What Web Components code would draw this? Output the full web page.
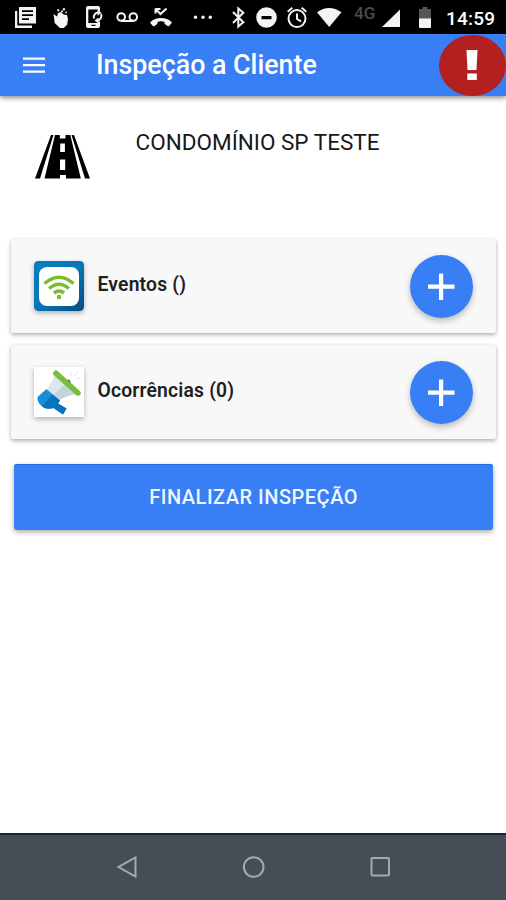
<!DOCTYPE html>
<html lang="pt-BR">
<head>
<meta charset="utf-8">
<title>Inspeção a Cliente</title>
<style>
  body {
    margin: 0;
    background: #fff;
    font-family: Roboto, "Noto Sans", sans-serif;
  }
</style>
</head>
<body>
<inspection-app></inspection-app>

<script>
// statusBar.js

class StatusBar extends HTMLElement {
  constructor() {
    super();
    this.attachShadow({ mode: 'open' });
  }

  connectedCallback() {
    this.shadowRoot.innerHTML = `
      <style>
        :host {
          display: flex;
          justify-content: space-between;
          box-sizing: border-box;
          height: 34px;
          padding: 0 10px 0 14px;
          background: #000;
          color: #fff;
        }

        .group {
          display: flex;
          align-items: center;
        }

        svg {
          display: block;
          flex: none;
          height: 34px;
          fill: #f4f4f4;
        }

        .line {
          fill: none;
          stroke: #f4f4f4;
          stroke-width: 2;
        }

        .network {
          width: 22px;
          margin: 0 6px 8px 11px;
          font-size: 17px;
          font-weight: 500;
          line-height: 20px;
          color: #4c4c4c;
        }

        .time {
          width: 50px;
          margin: 2px 0 0 14px;
          font-size: 19px;
          font-weight: 500;
          letter-spacing: 0.2px;
          white-space: nowrap;
        }
      </style>
      <div class="group">
        <svg width="24" viewBox="14 0 24 34">
          <path d="M15 11h2.3v14.6H32V28H15z"/>
          <path fill-rule="evenodd" d="M19 7h17v16.5H19zM22 10.3v1.7h11v-1.7zM22 14.3v1.7h11v-1.7zM22 18.3v1.7h7v-1.7z"/>
        </svg>
        <svg width="34" viewBox="38 0 34 34">
          <path d="M53.5 14l3.500 2.500 1-3.500 3-1 2.500 2.500 3.500.5 1 4-.8 5.500-3.400 3.500h-3.800l-5.300-5z"/>
          <path d="M57 9.5l1.8-.5.7 2-1.8.5zM62.5 8.8l2-1 .8 2-1.8 1zM60.8 10.900l1.8-.6.6 1.600-1.8.6zM65 12l1.4-.7.6 1.5-1.4.7z"/>
        </svg>
        <svg width="36" viewBox="72 0 36 34">
          <path fill-rule="evenodd" d="M88 6h10q2 0 2 2v3h-2v-1.5H88.3V23H98v-1.5h2V26q0 2-2 2H88q-2 0-2-2V8q0-2 2-2zM91.5 24.8v1.3h4v-1.3z"/>
          <path class="line" d="M94 18.5a4.600 4.600 0 0 1 5-6M101 14a4.600 4.600 0 0 1-4 6.5"/>
          <path d="M97.5 9.5l4 3.2-4 3zM98.5 17.5l-4 3 4 3z"/>
        </svg>
        <svg width="34" viewBox="108 0 34 34">
          <g class="line"><circle cx="121.2" cy="17" r="3.8"/><circle cx="133.3" cy="17" r="3.8"/><path d="M121 21h12.5"/></g>
        </svg>
        <svg width="36" viewBox="142 0 36 34">
          <path class="line" d="M155.5 8.5v5M155.5 9h5M155.8 9.3l4.700 4.700 6-5.500"/>
          <path d="M161 18c4.2 0 8 1.5 10.5 4l.2 1-2.8 3.2-1 .1-3.2-2.2-.4-2.3q-3.3-1-6.6 0l-.4 2.3-3.2 2.2-1-.1-2.8-3.2.2-1c2.5-2.5 6.3-4 10.5-4z"/>
        </svg>
        <svg width="36" viewBox="178 0 36 34">
          <circle cx="195.5" cy="17.3" r="1.7"/><circle cx="203" cy="17.3" r="1.7"/><circle cx="210.3" cy="17.3" r="1.7"/>
        </svg>
      </div>
      <div class="group">
        <svg width="16" viewBox="231 0 16 34">
          <path class="line" d="M233 12l10.3 10.3-5 4.2V8.5l5 4.2L233 23"/>
        </svg>
        <svg width="34" viewBox="247 0 34 34">
          <path fill-rule="evenodd" d="M266.5 7.2a10.300 10.300 0 1 1 0 20.6 10.300 10.300 0 0 1 0-20.6zM261.5 16v3.2h10V16z"/>
        </svg>
        <svg width="30" viewBox="281 0 30 34">
          <g class="line"><circle cx="297" cy="18.6" r="8.5"/><path d="M297 13.5v5.5l4 2.4M287.7 11.7l4.6-3.9M306.3 11.7l-4.6-3.9"/></g>
        </svg>
        <svg width="32" viewBox="311 0 32 34">
          <path d="M317 12.2q12-8.6 24.5 0L329.2 27z"/>
        </svg>
        <span class="network">4G</span>
        <svg width="19" viewBox="382 0 19 34">
          <path d="M400 9.5V27h-18z"/>
        </svg>
        <svg width="31" viewBox="401 0 31 34">
          <path fill="#565656" d="M419 9h3.5V7h5v2h3.5v10h-12z"/>
          <path d="M419 18.5h12V27q0 1-1 1h-10q-1 0-1-1z"/>
        </svg>
        <span class="time">14:59</span>
      </div>
    `;
  }
}

customElements.define('status-bar', StatusBar);

// appHeader.js

class AppHeader extends HTMLElement {
  constructor() {
    super();
    this.attachShadow({ mode: 'open' });
  }

  connectedCallback() {
    this.shadowRoot.innerHTML = `
      <style>
        :host {
          display: flex;
          align-items: center;
          height: 62px;
          background: #387ef5;
          color: #fff;
          box-shadow: 0 2px 5px rgba(0, 0, 0, 0.45);
        }

        .menu {
          margin-left: 23px;
        }

        h1 {
          flex: 1;
          margin: 0 0 0 51px;
          font-size: 26.8px;
          font-weight: 500;
          line-height: 32px;
          white-space: nowrap;
        }

        .alert {
          display: flex;
          align-items: center;
          justify-content: center;
          box-sizing: border-box;
          width: 67px;
          height: 61px;
          padding-right: 1px;
          border-radius: 50%;
          background: #b22020;
        }

        svg {
          display: block;
        }
      </style>
      <svg class="menu" width="22" height="18" viewBox="0 0 22 18" fill="#fff">
        <path d="M0 1.5h22v2.3H0zM0 8h22v2.3H0zM0 14.5h22v2.3H0z"/>
      </svg>
      <h1><slot></slot></h1>
      <div class="alert">
        <svg width="14" height="32" viewBox="0 0 14 32" fill="#fff">
          <path d="M1.5 1h11l-1 20h-9zM2.3 24.5h9.5V31H2.3z"/>
        </svg>
      </div>
    `;
  }
}

customElements.define('app-header', AppHeader);

// clientInfo.js

class ClientInfo extends HTMLElement {
  constructor() {
    super();
    this.attachShadow({ mode: 'open' });
  }

  connectedCallback() {
    this.shadowRoot.innerHTML = `
      <style>
        :host {
          display: flex;
          align-items: flex-start;
          box-sizing: border-box;
          height: 143px;
          padding: 32px 0 0 35px;
        }

        svg {
          display: block;
          margin-top: 6px;
        }

        p {
          margin: 0 0 0 45.6px;
          font-size: 22.5px;
          line-height: 28px;
          color: #181818;
          white-space: nowrap;
        }
      </style>
      <svg width="55" height="45" viewBox="0 0 55 45">
        <path d="M16 1h2.5L5 44.5H0zM36.5 1H39l16 43.5h-5zM20 1h4.8v3.5h5.7V1h4.8l10.5 43.5H31V41h-6v3.5H9.5z"/>
        <path fill="#fff" d="M25.3 9.5h4.6V18h-4.8zM25 25.5h5.2V36H25z"/>
      </svg>
      <p><slot></slot></p>
    `;
  }
}

customElements.define('client-info', ClientInfo);

// itemCard.js

class ItemCard extends HTMLElement {
  constructor() {
    super();
    this.attachShadow({ mode: 'open' });
  }

  connectedCallback() {
    this.shadowRoot.innerHTML = `
      <style>
        :host {
          display: flex;
          align-items: center;
          box-sizing: border-box;
          height: 94px;
          padding: 0 23px;
          border-radius: 2px;
          background: #f8f8f8;
          box-shadow: 0 2px 4px rgba(0, 0, 0, 0.3), 0 0 2px rgba(0, 0, 0, 0.08);
        }

        ::slotted(svg) {
          display: block;
          box-shadow: 0 2px 5px rgba(0, 0, 0, 0.3);
        }

        h2 {
          flex: 1;
          margin: 0 0 3px 13.5px;
          font-size: 19.3px;
          font-weight: 600;
          line-height: 24px;
          letter-spacing: 0.2px;
          color: #202020;
          white-space: nowrap;
        }

        button {
          display: flex;
          align-items: center;
          justify-content: center;
          width: 63px;
          height: 63px;
          margin-top: 1px;
          padding: 0;
          border: 0;
          border-radius: 50%;
          background: #387ef5;
          box-shadow: 0 3px 6px rgba(0, 0, 0, 0.26);
        }
      </style>
      <slot name="icon"></slot>
      <h2>${this.getAttribute('label')}</h2>
      <button aria-label="Adicionar">
        <svg width="27" height="27" viewBox="0 0 27 27" fill="#fff">
          <path d="M11 .5h4.200v11H26.500v4.200H15.200V27H11V15.700H0v-4.200h11z"/>
        </svg>
      </button>
    `;
  }
}

customElements.define('item-card', ItemCard);

// actionButton.js

class ActionButton extends HTMLElement {
  constructor() {
    super();
    this.attachShadow({ mode: 'open' });
  }

  connectedCallback() {
    this.shadowRoot.innerHTML = `
      <style>
        :host {
          display: block;
        }

        button {
          display: block;
          width: 100%;
          height: 66px;
          padding: 0;
          border: 0;
          border-radius: 3px;
          background: #387ef5;
          box-shadow: 0 2px 5px rgba(0, 0, 0, 0.35), inset 0 1px 0 #1d70df;
          color: #f0f6ff;
          font-family: inherit;
          font-size: 20px;
          font-weight: 500;
          letter-spacing: 0.5px;
          text-transform: uppercase;
        }
      </style>
      <button><slot></slot></button>
    `;
  }
}

customElements.define('action-button', ActionButton);

// navBar.js

class NavBar extends HTMLElement {
  constructor() {
    super();
    this.attachShadow({ mode: 'open' });
  }

  connectedCallback() {
    this.shadowRoot.innerHTML = `
      <style>
        :host {
          display: flex;
          justify-content: center;
          gap: 104px;
          box-sizing: border-box;
          height: 67px;
          padding: 20px 0 0 1px;
          border-top: 2px solid #14263a;
          background: #454d55;
        }

        svg {
          display: block;
          fill: none;
          stroke: #a4a9ad;
          stroke-width: 2;
        }
      </style>
      <svg width="22" height="24" viewBox="0 0 22 24"><path d="M19.5 2.5v19L2.5 12z"/></svg>
      <svg width="24" height="24" viewBox="0 0 24 24"><circle cx="11.7" cy="12" r="9.8"/></svg>
      <svg width="22" height="24" viewBox="0 0 22 24"><rect x="1.5" y="3" width="17.5" height="17.5" rx="1"/></svg>
    `;
  }
}

customElements.define('nav-bar', NavBar);

// inspectionApp.js

class InspectionApp extends HTMLElement {
  constructor() {
    super();
    this.attachShadow({ mode: 'open' });
  }

  connectedCallback() {
    this.shadowRoot.innerHTML = `
      <style>
        :host {
          display: flex;
          flex-direction: column;
          height: 900px;
          overflow: hidden;
        }

        main {
          flex: 1;
        }

        .cards {
          display: grid;
          gap: 12px;
          margin: 0 10px 0 11px;
        }

        action-button {
          margin: 25px 13px 0 14.4px;
        }
      </style>
      <status-bar></status-bar>
      <app-header>Inspeção a Cliente</app-header>
      <main>
        <client-info>CONDOMÍNIO SP TESTE</client-info>
        <div class="cards">
          <item-card label="Eventos ()">
            <svg slot="icon" width="50" height="50" viewBox="0 0 50 50" style="border-radius: 4px">
              <defs>
                <linearGradient id="frame" x1="0" y1="0" x2="1" y2="1">
                  <stop offset="0" stop-color="#087cc1"/>
                  <stop offset="0.5" stop-color="#0876b8"/>
                  <stop offset="1" stop-color="#064c80"/>
                </linearGradient>
              </defs>
              <rect width="50" height="50" rx="4" fill="url(#frame)"/>
              <rect x="5" y="6" width="40" height="39" rx="8" fill="#fff"/>
              <g fill="none" stroke="#77bd2d" stroke-width="3.6">
                <path d="M10.5 22.5q14.5-12.5 29 0"/>
                <path d="M15.2 27.5q9.8-8.5 19.6 0"/>
                <path d="M20 32q5-4 10 0"/>
              </g>
              <circle cx="25" cy="36" r="2.2" fill="#77bd2d"/>
            </svg>
          </item-card>
          <item-card label="Ocorrências (0)">
            <svg slot="icon" width="50" height="50" viewBox="0 0 50 50">
              <rect width="50" height="50" fill="#fff"/>
              <path d="M20.5 7Q18 16 13 22l12.5 11q8-5 17.5-6z" fill="#dce7ed"/>
              <path d="M31 17L19 28l6.5 5q8-5 17.5-6z" fill="#c3d4dd"/>
              <path d="M32.5 14.5q2-4 4 .5v3z" fill="#35434a"/>
              <path d="M12.5 22L26 33.5l-2 3 8.5 5-3.5 6-9.500-6.500q-7 2-11.500-1.500-5-4-4.500-9.500z" fill="#168fd6"/>
              <path d="M18.5 27.5L26 33.5l-2 3 8.5 5-3.5 6-9.500-6.500q-7 2-11.500-1.500z" fill="#0873bd"/>
              <path d="M22 6.300l22 19.700" stroke="#78bd3d" stroke-width="5.6" stroke-linecap="round"/>
              <path d="M37 9V4M40 10l4-6M42 12l5-2" stroke="#e4e7e8" fill="none"/>
            </svg>
          </item-card>
        </div>
        <action-button>Finalizar Inspeção</action-button>
      </main>
      <nav-bar></nav-bar>
    `;
  }
}

customElements.define('inspection-app', InspectionApp);
</script>
</body>
</html>
